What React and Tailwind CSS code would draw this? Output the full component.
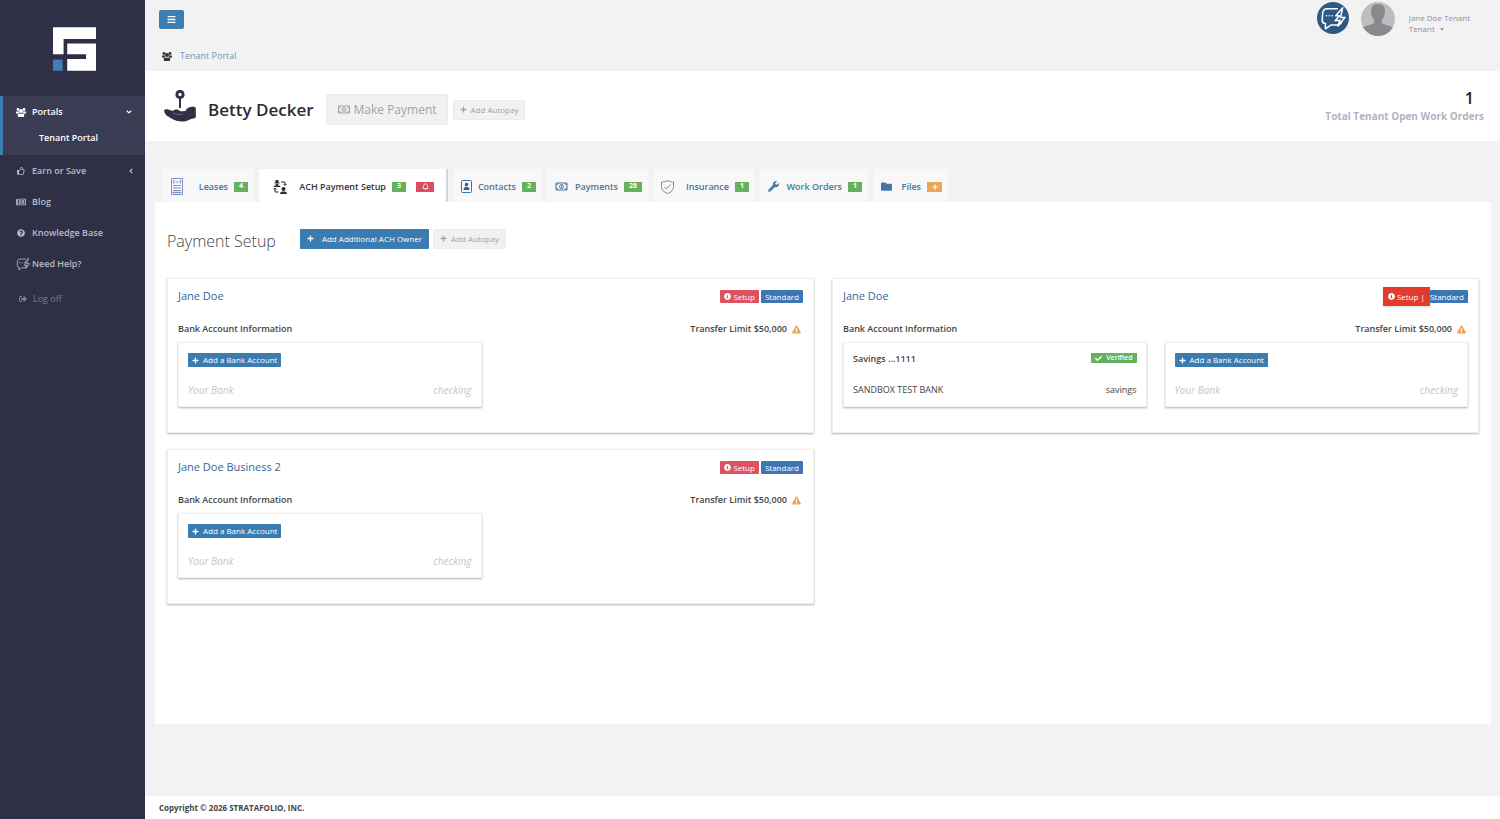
import {
  FaAngleDown,
  FaAngleLeft,
  FaBars,
  FaCaretDown,
  FaCheck,
  FaExclamationTriangle,
  FaFolder,
  FaInfoCircle,
  FaPlus,
  FaQuestionCircle,
  FaRegBell,
  FaRegNewspaper,
  FaRegThumbsUp,
  FaSignOutAlt,
  FaWrench,
} from 'react-icons/fa';

const Logo = () => (
  <svg viewBox="0 0 130 132" className="h-11 w-[43px]" aria-hidden="true">
    <path d="M0 0H130V36H32V82H0Z" fill="#fff" />
    <path d="M43 49H130V132H43V96H100V82H43Z" fill="#fff" />
    <path d="M0 98H29V132H0Z" fill="#3f7fb5" />
  </svg>
);

const UsersIcon = ({ className }) => (
  <svg viewBox="0 0 20 18" className={className} fill="currentColor" aria-hidden="true">
    <circle cx="4" cy="3" r="2.800" />
    <circle cx="16" cy="3" r="2.800" />
    <circle cx="10" cy="6" r="4" />
    <path d="M0 10c0-2 .8-3.500 2-3.500 1 .8 2.500.8 3.500.2.200 1.500.6 2.300 1.300 3C5 9.800 4 10.500 3.500 11.500H2c-1.200 0-2-.5-2-1.500ZM20 10c0-2-.8-3.500-2-3.500-1 .8-2.500.8-3.500.2-.2 1.500-.6 2.300-1.300 3 1.800.1 2.800.8 3.300 1.800H18c1.200 0 2-.5 2-1.500Z" />
    <path d="M3.500 15.500c0-3 1-5.200 3-5.200 2 1.800 5 1.800 7 0 2 0 3 2.200 3 5.200 0 1.500-1 2.500-2.500 2.500H6c-1.500 0-2.500-1-2.500-2.500Z" />
  </svg>
);

const HandKeyIcon = () => (
  <svg viewBox="0 0 32 32" className="h-8 w-8 shrink-0" fill="#2f3046" aria-hidden="true">
    <path fillRule="evenodd" d="M16 0a4.500 4.500 0 0 1 1 8.900V18h-2V8.900A4.500 4.500 0 0 1 16 0Zm0 2.800a1.700 1.700 0 1 0 0 3.400 1.700 1.700 0 0 0 0-3.400Z" />
    <path d="M0 20.500c1-1.300 3-1.500 5-.8l4 1.300c1.500-1.500 3.500-1.800 5.500-1 1.500.8 2 1.500 4 1.300l3-.4c1-2.500 3-4 6-4.200 2.500-.2 3.800.2 4.300 1.200v8.500c0 1.300-1 2-2.500 2-3 0-5 2.400-9 3-4 .5-8-.2-11-1.800L4 26.500C2 25.500.5 23.500 0 20.500Z" />
    <path d="M9 23c3 1.500 6 2 10 1" fill="none" stroke="#77788c" strokeWidth="0.800" />
  </svg>
);

const MoneyIcon = ({ className }) => (
  <svg viewBox="0 0 26 18" className={className} fill="none" stroke="currentColor" strokeWidth="2" aria-hidden="true">
    <path d="M2 2h22v14H2z" />
    <path d="M2 6c2.500 0 4-1.500 4-4M20 2c0 2.500 1.500 4 4 4M24 12c-2.500 0-4 1.500-4 4M6 16c0-2.500-1.500-4-4-4" />
    <circle cx="13" cy="9" r="4" />
    <path d="M13 7v4" />
  </svg>
);

const LeaseIcon = () => (
  <svg viewBox="0 0 24 34" className="h-[17px] w-3" fill="none" stroke="#7f93c4" strokeWidth="2" aria-hidden="true">
    <path d="M1 1h22v32H1z" />
    <path d="M7 5H5v5h2M17 5h2v5h-2M9 8h6M4 15h16M4 20h16M4 25h16" />
    <path d="M3 29h18" strokeWidth="3" />
  </svg>
);

const TransferIcon = () => (
  <svg viewBox="0 0 28 28" className="size-3.5" fill="#2b2b33" aria-hidden="true">
    <path d="M3 5h10v2H3zM5 0h6v5H5zM5 8h6a3 3 0 0 1-6 0ZM1 14c0-2 2-3 4-3h6c2 0 4 1 4 3Z" />
    <circle cx="21" cy="18" r="4" />
    <path d="M14 28c0-3 2-5 5-5h4c3 0 5 2 5 5Z" />
    <path d="M16 4h8v6M21 8l3 3 3-3M11 24H4v-7M1 19l3-3 3 3" fill="none" stroke="#2b2b33" strokeWidth="2" />
  </svg>
);

const ContactIcon = () => (
  <svg viewBox="0 0 22 26" className="h-[13px] w-[11px]" aria-hidden="true">
    <rect x="1" y="1" width="20" height="24" rx="2" fill="none" stroke="#3d6fa5" strokeWidth="2" />
    <circle cx="11" cy="9" r="3.500" fill="#2f5f96" />
    <path d="M5 20c0-4 2-6.500 6-6.500s6 2.500 6 6.500Z" fill="#2f5f96" />
  </svg>
);

const ShieldIcon = () => (
  <svg viewBox="0 0 26 28" className="h-3.5 w-[13px]" fill="none" stroke="#7b8794" strokeWidth="2" aria-hidden="true">
    <path d="M13 1c3 2 7 3 12 3v9c0 7-5 11-12 14C6 24 1 20 1 13V4c5 0 9-1 12-3Z" />
    <path d="m7 14 4 4 8-9" />
  </svg>
);

const ChatBoltIcon = ({ className }) => (
  <svg viewBox="0 0 24 24" className={className} fill="none" stroke="currentColor" strokeWidth="1.400" strokeLinejoin="round" strokeLinecap="round" aria-hidden="true">
    <path d="M16 3.500H6.500C4 3.500 3 4.500 2.500 7L2 14c0 2 1 3 3 3v5l5-3.500h5.500c2 0 3.500-.8 4.500-2.500" />
    <path d="M21 2.500 14.500 10h3.500l-4 4.500 4.500-.5-2 5.500L23 11.500h-4Z" />
    <path d="M6 10h.1M8.500 10h.1M11 10h.1" />
  </svg>
);

const Avatar = () => (
  <svg viewBox="0 0 34 34" className="size-[34px]" aria-hidden="true">
    <defs>
      <clipPath id="avatar-clip">
        <circle cx="17" cy="17" r="17" />
      </clipPath>
    </defs>
    <g clipPath="url(#avatar-clip)">
      <path d="M0 0h34v34H0z" fill="#bcbdbf" />
      <path d="M17 2c5 0 7.300 3 7 8-.2 4-1.800 6.500-3.300 8v3c2 2 9 2.500 12 5v8H1v-8c3-2.500 10-3 12.300-5v-3c-1.500-1.500-3.100-4-3.300-8-.3-5 2-8 7-8Z" fill="#87898d" />
    </g>
  </svg>
);

const navLinks = [
  { label: 'Earn or Save', icon: <FaRegThumbsUp className="size-2" />, arrow: true },
  { label: 'Blog', icon: <FaRegNewspaper className="size-2.5" /> },
  { label: 'Knowledge Base', icon: <FaQuestionCircle className="size-2" /> },
  { label: 'Need Help?', icon: <ChatBoltIcon className="size-3.5" /> },
];

const tabs = [
  { label: 'Leases', count: '4', icon: <LeaseIcon />, width: 'w-[91px]' },
  { label: 'ACH Payment Setup', count: '3', icon: <TransferIcon />, width: 'w-[189px]', active: true },
  { label: 'Contacts', count: '2', icon: <ContactIcon />, width: 'w-[89px]' },
  { label: 'Payments', count: '28', icon: <MoneyIcon className="h-[9px] w-[13px]" />, width: 'w-[101px]' },
  { label: 'Insurance', count: '1', icon: <ShieldIcon />, width: 'w-[102px]' },
  { label: 'Work Orders', count: '1', icon: <FaWrench className="size-[11px]" />, width: 'w-[108px]' },
  { label: 'Files', icon: <FaFolder className="size-[11px]" />, width: 'w-[75px]' },
];

const owners = [
  { name: 'Jane Doe', accounts: [] },
  {
    name: 'Jane Doe',
    highlight: true,
    accounts: [{ title: 'Savings ...1111', bank: 'SANDBOX TEST BANK', type: 'savings' }],
  },
  { name: 'Jane Doe Business 2', accounts: [] },
];

const Sidebar = () => (
  <aside className="flex w-[145px] shrink-0 flex-col bg-[#2f3046] text-[9px] leading-3 font-semibold text-[#b9bac8]">
    <div className="flex h-24 items-center justify-center pt-0.5 pl-1">
      <Logo />
    </div>
    <nav>
      <div className="h-[59px] border-l-[3px] border-[#3f7fb5] bg-[#3a3c53] text-white">
        <button className="flex w-full items-center pt-2.5 pr-3 pl-[13px] font-semibold">
          <UsersIcon className="h-[9px] w-2.5" />
          <span className="ml-1.5">Portals</span>
          <FaAngleDown className="ml-auto size-2" />
        </button>
        <a href="#tenant" className="mt-3.5 block pl-9">Tenant Portal</a>
      </div>
      {navLinks.map((link) => (
        <a key={link.label} href="#nav" className="flex h-[31px] items-center pr-2.5 pl-4">
          <span className="flex min-w-2.5 justify-center">{link.icon}</span>
          <span className={link.label === 'Need Help?' ? 'ml-0.5' : 'ml-1.5'}>{link.label}</span>
          {link.arrow && <FaAngleLeft className="ml-auto size-2" />}
        </a>
      ))}
      <a href="#logoff" className="mt-1 flex h-[31px] items-center pl-[19px] font-normal text-[#7d7e8e]">
        <FaSignOutAlt className="size-2" />
        <span className="ml-1.5">Log off</span>
      </a>
    </nav>
  </aside>
);

const TopBar = () => (
  <header className="flex h-[71px] shrink-0 justify-between pr-[30px] pl-3.5">
    <div>
      <button aria-label="Toggle menu" className="mt-2.5 flex h-[19px] w-[25px] items-center justify-center rounded-xs bg-[#3d7eb0] text-white">
        <FaBars className="size-[9px]" />
      </button>
      <div className="mt-[19px] flex items-center gap-2 pl-[3px] text-[9px] leading-4 text-[#7196b3]">
        <UsersIcon className="h-[9px] w-2.5 text-[#333]" />
        <a href="#tenant">Tenant Portal</a>
      </div>
    </div>
    <div className="flex items-start pt-0.5">
      <button aria-label="Support chat" className="flex size-8 items-center justify-center rounded-full bg-[#2c5a85] text-white">
        <ChatBoltIcon className="size-[26px]" />
      </button>
      <div className="ml-3 flex">
        <Avatar />
        <button className="ml-3.5 pt-2 text-left text-[8px] leading-[11px] font-medium text-[#8e9095]">
          <span className="block">Jane Doe Tenant</span>
          <span className="flex items-center gap-1">
            Tenant <FaCaretDown className="size-1.5" />
          </span>
        </button>
      </div>
    </div>
  </header>
);

const AutopayButton = () => (
  <button disabled className="flex h-5 items-center gap-1 rounded-xs border border-[#ececec] bg-[#f1f1f1] px-1.5 text-[8px] text-[#a3a3a3]">
    <FaPlus className="size-[7px]" />
    Add Autopay
  </button>
);

const TenantHeader = () => (
  <section className="flex h-[70px] shrink-0 items-center justify-between bg-white pr-4 pl-[19px]">
    <div className="flex items-center">
      <HandKeyIcon />
      <h1 className="ml-3 pt-2 text-[17px] leading-6 font-semibold text-[#2b2b33]">Betty Decker</h1>
      <div className="flex items-center gap-[5px] pt-[7px] pl-3">
        <button disabled className="flex h-[31px] items-center gap-[3px] rounded-xs border border-[#ececec] bg-[#f1f1f1] px-2.5 text-[12px] text-[#a3a3a3]">
          <MoneyIcon className="h-[9px] w-3.5" />
          Make Payment
        </button>
        <AutopayButton />
      </div>
    </div>
    <div className="text-right">
      <div className="pr-2.5 text-[16px] leading-5 font-semibold text-[#222]">1</div>
      <div className="text-[10px] leading-4 font-bold text-[#b3b2c0]">Total Tenant Open Work Orders</div>
    </div>
  </section>
);

const Count = ({ children }) => (
  <span className="flex h-2.5 min-w-3.5 items-center justify-center bg-[#64b25f] px-[5px] text-[7px] font-bold text-white">
    {children}
  </span>
);

const TabBar = () => (
  <div role="tablist" className="flex items-stretch gap-[5px] pl-2">
    {tabs.map((tab) => (
      <button
        key={tab.label}
        role="tab"
        aria-selected={!!tab.active}
        className={`${tab.width} flex h-[33px] shrink-0 items-center justify-between whitespace-nowrap pt-0.5 text-[9px] font-semibold ${
          tab.active ? 'border-r-2 border-[#d5d5da] bg-white pr-3 pl-3.5 text-[#333]' : 'bg-[#f8f8f8] pr-1.5 pl-2 text-[#4577a3]'
        }`}
      >
        {tab.icon}
        <span className="flex items-center gap-1.5">
          {tab.label}
          {tab.count ? (
            <Count>{tab.count}</Count>
          ) : (
            <span className="flex h-2.5 w-[15px] items-center justify-center bg-[#eda555] text-white">
              <FaPlus className="size-1.5" />
            </span>
          )}
          {tab.active && (
            <span className="ml-1 flex h-2.5 w-[18px] items-center justify-center bg-[#dc4d5f] text-white">
              <FaRegBell className="size-[7px]" />
            </span>
          )}
        </span>
      </button>
    ))}
  </div>
);

const EmptyAccount = () => (
  <div className="h-[65px] border border-[#f0f0f0] px-[9px] pt-2.5 shadow-[0_1px_2px_rgba(0,0,0,0.3)]">
    <button className="flex h-3.5 items-center gap-1 rounded-[1px] bg-[#3a7cb0] px-1 text-[8px] font-medium text-white">
      <FaPlus className="size-[7px]" />
      Add a Bank Account
    </button>
    <div className="mt-[15px] flex justify-between text-[10px] leading-4 text-[#c6c6c6] italic">
      <span>Your Bank</span>
      <span>checking</span>
    </div>
  </div>
);

const Account = ({ account }) => (
  <div className="h-[65px] border border-[#f0f0f0] px-[9px] pt-2 text-[#444] shadow-[0_1px_2px_rgba(0,0,0,0.3)]">
    <div className="flex items-start justify-between text-[9px] leading-4 font-semibold">
      <span>{account.title}</span>
      <span className="mt-0.5 flex h-2.5 items-center gap-1 bg-[#64b25f] px-1 text-[7px] text-white">
        <FaCheck className="size-[7px]" />
        Verified
      </span>
    </div>
    <div className="mt-[15px] flex justify-between text-[9px] leading-4">
      <span>{account.bank}</span>
      <span>{account.type}</span>
    </div>
  </div>
);

const OwnerCard = ({ owner }) => (
  <article className="h-[155px] border border-[#f0f0f0] bg-white px-2.5 shadow-[0_1px_2px_rgba(0,0,0,0.3)]">
    <div className="flex h-[35px] items-center justify-between">
      <a href="#owner" className="text-[11px] font-medium text-[#35659b]">{owner.name}</a>
      <div className={`flex items-center text-[8px] font-medium text-white ${owner.highlight ? '' : 'gap-0.5'}`}>
        {owner.highlight ? (
          <span className="flex h-[19px] items-center gap-0.5 bg-[#e23b2e] px-[5px] shadow-sm">
            <FaInfoCircle className="size-[7px]" />
            Setup |
          </span>
        ) : (
          <span className="flex h-[13px] items-center gap-0.5 rounded-[1px] bg-[#dc5261] px-1">
            <FaInfoCircle className="size-[7px]" />
            Setup
          </span>
        )}
        <span className={`flex h-[13px] items-center rounded-[1px] bg-[#3b77b5] ${owner.highlight ? 'pr-1' : 'px-1'}`}>
          Standard
        </span>
      </div>
    </div>
    <div className="flex h-7 items-end justify-between pb-[5px] text-[9px] leading-4 font-semibold text-[#444]">
      <span>Bank Account Information</span>
      <span className="flex items-center gap-[5px] pr-0.5">
        Transfer Limit $50,000
        <FaExclamationTriangle className="size-[9px] text-[#eda555]" />
      </span>
    </div>
    <div className="grid grid-cols-2 gap-[18px]">
      {owner.accounts.map((account) => (
        <Account key={account.title} account={account} />
      ))}
      <EmptyAccount />
    </div>
  </article>
);

const PaymentSetup = () => (
  <div className="min-h-[522px] bg-white px-3 pb-8">
    <div className="flex h-[76px] items-center pb-[3px]">
      <h2 className="pt-[5px] text-[16px] font-light text-[#444]">Payment Setup</h2>
      <button className="mr-1 ml-6 flex h-5 items-center gap-2 rounded-[1px] bg-[#3a7cb0] px-[7px] text-[8px] font-medium text-white">
        <FaPlus className="size-[7px]" />
        Add Additional ACH Owner
      </button>
      <AutopayButton />
    </div>
    <div className="grid grid-cols-2 gap-x-[18px] gap-y-4">
      {owners.map((owner, i) => (
        <OwnerCard key={i} owner={owner} />
      ))}
    </div>
  </div>
);

function App() {
  return (
    <div className="flex min-h-screen bg-[#f2f2f3] font-['Open_Sans',sans-serif]">
      <Sidebar />
      <div className="flex min-w-0 flex-1 flex-col">
        <TopBar />
        <TenantHeader />
        <main className="flex-1 pt-7 pr-[9px] pb-6 pl-2.5">
          <TabBar />
          <PaymentSetup />
        </main>
        <footer className="bg-white px-3.5 pt-1.5 pb-[5px] text-[8px] leading-3 font-bold text-[#444]">
          Copyright © 2026 STRATAFOLIO, INC.
        </footer>
      </div>
    </div>
  );
}

export default App;
